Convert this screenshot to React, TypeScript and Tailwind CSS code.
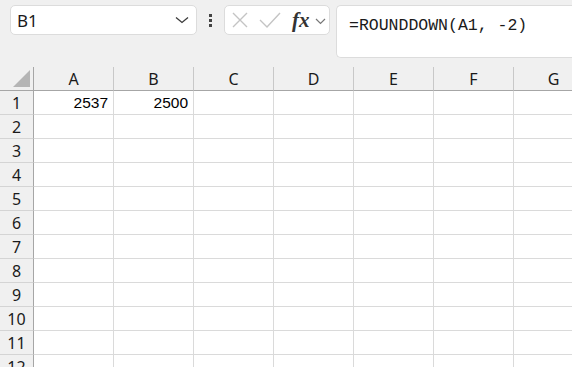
import React from "react";

const cols = ["A", "B", "C", "D", "E", "F", "G"];
const rows = Array.from({ length: 12 }, (_, i) => i + 1);

export default function App() {
  return (
    <div className="w-[572px] h-[367px] overflow-hidden bg-[#f0f0f0] relative" style={{ fontFamily: '"Segoe UI","Noto Sans",sans-serif' }}>
      {/* top bar */}
      <div className="h-[67px] flex items-start pt-[5px]">
        <div className="ml-[10px] shrink-0 w-[187px] h-[30px] bg-white border border-[#dcdcdc] rounded-[5px] flex items-center pl-[6px] pr-[6px]">
          <span className="text-[17px] text-[#1a1a1a] flex-1 leading-none" style={{ fontFamily: '"Noto Sans","Open Sans",sans-serif' }}>B1</span>
          <svg width="14" height="8" viewBox="0 0 14 8" className="mr-[1px]">
            <path d="M1 1.5 L7 6.5 L13 1.5" fill="none" stroke="#3a3a3a" strokeWidth="1.3" />
          </svg>
        </div>
        <div className="w-[27px] shrink-0 h-[30px] flex flex-col items-center justify-center gap-[2px]">
          <div className="w-[3px] h-[3px] bg-[#444]" />
          <div className="w-[3px] h-[3px] bg-[#444]" />
          <div className="w-[3px] h-[3px] bg-[#444]" />
        </div>
        <div className="w-[106px] shrink-0 h-[30px] bg-white border border-[#dcdcdc] rounded-[5px] flex items-center">
          <svg width="18" height="18" viewBox="0 0 18 18" className="ml-[6px]">
            <path d="M2 2 L16 16 M16 2 L2 16" stroke="#c4c4c4" strokeWidth="1.4" />
          </svg>
          <svg width="22" height="16" viewBox="0 0 22 16" className="ml-[10px]">
            <path d="M1 8 L8 15 L21 1" fill="none" stroke="#c4c4c4" strokeWidth="1.4" />
          </svg>
          <span className="ml-[11px] text-[21px] italic font-bold text-[#333] leading-none" style={{ fontFamily: '"Liberation Serif","DejaVu Serif",serif' }}>fx</span>
          <svg width="11" height="7" viewBox="0 0 11 7" className="ml-[5px] mt-[2px]">
            <path d="M1 1 L5.5 5.5 L10 1" fill="none" stroke="#777" strokeWidth="1.2" />
          </svg>
        </div>
        <div className="ml-[6px] flex-1 h-[53px] bg-white border border-[#dcdcdc] rounded-l-[5px] border-r-0 pl-[12px] pt-[6px]">
          <span className="text-[16.5px] text-[#1a1a1a] leading-none whitespace-pre" style={{ fontFamily: '"Liberation Mono","DejaVu Sans Mono",monospace' }}>=ROUNDDOWN(A1, -2)</span>
        </div>
      </div>

      {/* grid */}
      <div className="flex flex-col" style={{ fontFamily: '"Liberation Sans",Arial,sans-serif' }}>
        <div className="flex h-[24px]">
          <div className="w-[34px] shrink-0 h-[24px] border-r border-b border-[#a6a6a6] bg-[#f0f0f0] flex items-end justify-end pr-[3px] pb-[3px]">
            <svg width="17" height="17" viewBox="0 0 17 17">
              <path d="M17 0 L17 17 L0 17 Z" fill="#b5b5b5" />
            </svg>
          </div>
          {cols.map((c) => (
            <div key={c} className="w-[80px] shrink-0 h-[24px] border-r border-[#c8c8c8] border-b border-b-[#a6a6a6] flex items-center justify-center text-[16px] text-[#1a1a1a]" style={{ fontFamily: '"Noto Sans","Open Sans",sans-serif' }}>
              {c}
            </div>
          ))}
        </div>
        {rows.map((r) => (
          <div key={r} className="flex h-[24px]">
            <div className="w-[34px] shrink-0 h-[24px] border-r border-[#a6a6a6] border-b border-b-[#d4d4d4] bg-[#f0f0f0] flex items-center justify-center text-[16px] text-[#1a1a1a]" style={{ fontFamily: '"Noto Sans","Open Sans",sans-serif' }}>
              {r}
            </div>
            {cols.map((c) => (
              <div key={c} className="w-[80px] shrink-0 h-[24px] bg-white border-r border-b border-[#dadada] flex items-center justify-end pr-[5px] text-[15.5px] text-black">
                {r === 1 && c === "A" ? "2537" : r === 1 && c === "B" ? "2500" : ""}
              </div>
            ))}
          </div>
        ))}
      </div>
    </div>
  );
}
